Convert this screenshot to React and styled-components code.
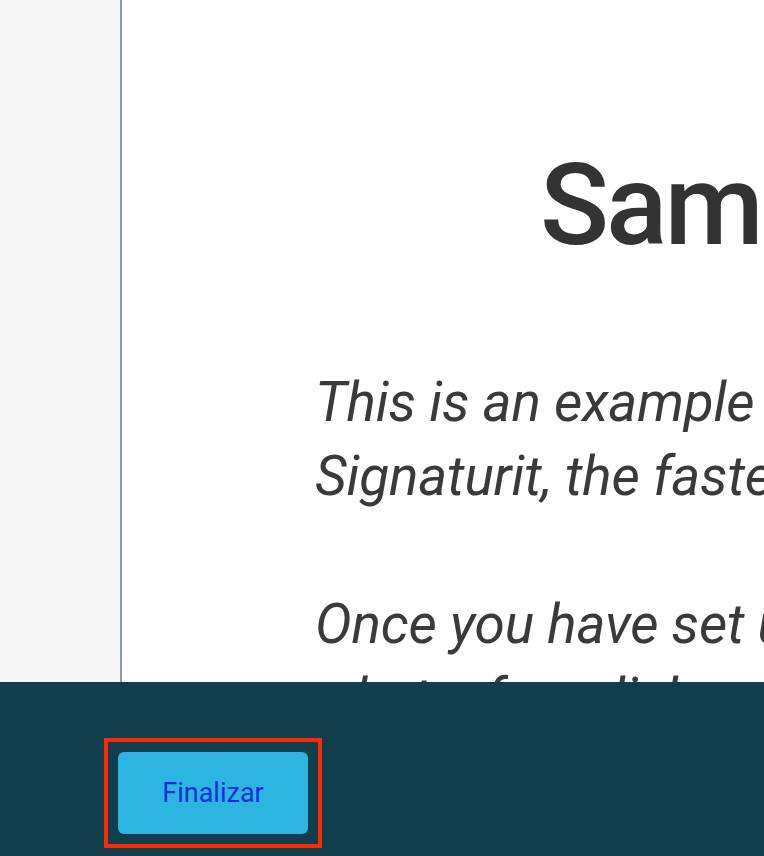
import React from 'react';
import styled, { createGlobalStyle } from 'styled-components';

const GlobalStyle = createGlobalStyle`
    html, body {
        margin: 0;
        padding: 0;
        overflow: hidden;
    }
    body {
        font-family: Roboto, "Liberation Sans", sans-serif;
    }
`;

const Screen = styled.div`
    display: flex;
    flex-direction: column;
    width: 764px;
    height: 856px;
    overflow: hidden;
`;

const Workspace = styled.div`
    flex: 1;
    display: flex;
    min-height: 0;
`;

const Sidebar = styled.aside`
    width: 120px;
    flex-shrink: 0;
    background: #f5f5f5;
    border-right: 2px solid #8c9aa2;
`;

const Viewer = styled.main`
    flex: 1;
    background: #fff;
    overflow: hidden;
`;

const Page = styled.div`
    width: 1400px;
    padding-top: 148px;
    color: #333;
    white-space: nowrap;
`;

const Title = styled.h1`
    margin: 0 0 0 418px;
    font-size: 114px;
    line-height: 1;
    font-weight: 500;
    letter-spacing: -3px;
`;

const Body = styled.div`
    margin-top: 103px;
    padding-left: 193px;
`;

const Paragraph = styled.p`
    margin: 0 0 74px;
    font-size: 55px;
    line-height: 74px;
    font-style: italic;
    letter-spacing: -0.2px;
    color: #3a3a3a;
`;

const Footer = styled.footer`
    height: 174px;
    flex-shrink: 0;
    background: #113e4c;
    padding: 56px 0 0 104px;
    box-sizing: border-box;
`;

// red highlight drawn round the focused button
const FocusRing = styled.div`
    display: inline-block;
    border: 4px solid #ff2a00;
    padding: 10px;
`;

const FinishButton = styled.button`
    display: block;
    width: 190px;
    height: 82px;
    border: none;
    border-radius: 6px;
    background: #2bb5e0;
    color: #102fdf;
    font-family: Roboto, "Liberation Sans", sans-serif;
    font-size: 27px;
    cursor: pointer;
`;

export default function App() {
    return (
        <>
            <GlobalStyle />
            <Screen>
                <Workspace>
                    <Sidebar />
                    <Viewer>
                        <Page>
                            <Title>Sample Document</Title>
                            <Body>
                                <Paragraph>
                                    This is an example document created with
                                    <br />
                                    Signaturit, the fastest way to sign documents.
                                </Paragraph>
                                <Paragraph>
                                    Once you have set up your signature, you will see
                                    <br />
                                    what a few clicks can do for you.
                                </Paragraph>
                            </Body>
                        </Page>
                    </Viewer>
                </Workspace>
                <Footer>
                    <FocusRing>
                        <FinishButton>Finalizar</FinishButton>
                    </FocusRing>
                </Footer>
            </Screen>
        </>
    );
}
